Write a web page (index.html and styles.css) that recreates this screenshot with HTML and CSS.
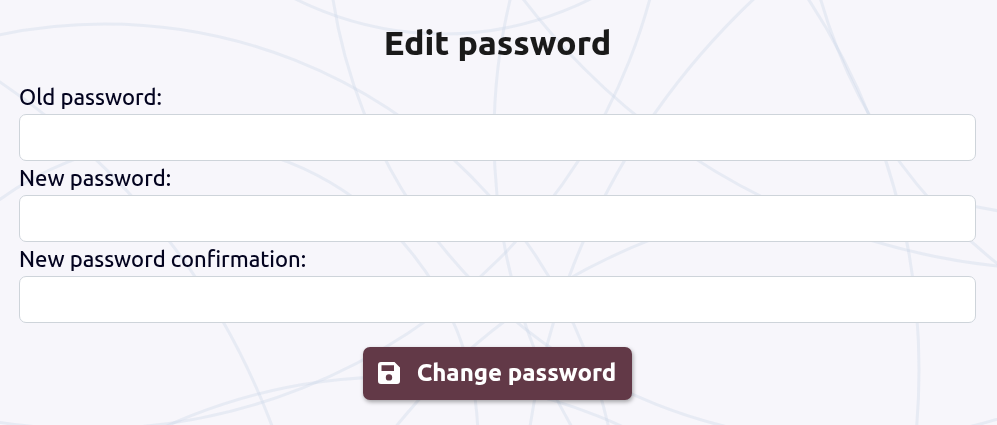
FILE: index.html
```html
<!DOCTYPE html>
<html lang="en">
<head>
<meta charset="utf-8">
<meta name="viewport" content="width=device-width, initial-scale=1">
<title>Edit password</title>
<link rel="stylesheet" href="styles.css">
</head>
<body>
<svg class="backdrop" viewBox="0 0 997 425" preserveAspectRatio="xMidYMin slice" aria-hidden="true">
  <circle cx="105" cy="540" r="516"/>
  <circle cx="848" cy="-80" r="521"/>
  <circle cx="-401" cy="679" r="719"/>
  <circle cx="178" cy="441" r="300"/>
  <circle cx="88" cy="-153" r="582"/>
  <circle cx="394" cy="928" r="551"/>
  <circle cx="443" cy="-294" r="328"/>
  <circle cx="1076" cy="136" r="582"/>
  <circle cx="1071" cy="-419" r="689"/>
  <circle cx="1260" cy="536" r="738"/>
  <circle cx="243" cy="370" r="676"/>
  <circle cx="1318" cy="-142" r="517"/>
  <circle cx="873" cy="810" r="612"/>
</svg>
<main class="page">
  <h1 class="title">Edit password</h1>
  <form class="form">
    <div class="field">
      <label class="label" for="old">Old password:</label>
      <input class="input" id="old" type="password">
    </div>
    <div class="field">
      <label class="label" for="new">New password:</label>
      <input class="input" id="new" type="password">
    </div>
    <div class="field">
      <label class="label" for="confirm">New password confirmation:</label>
      <input class="input" id="confirm" type="password">
    </div>
    <button class="submit" type="submit">
      <svg class="icon" viewBox="0 0 22 22" aria-hidden="true">
        <path fill-rule="evenodd" d="M3 0H16.500L22 5.500V19a3 3 0 0 1-3 3H3a3 3 0 0 1-3-3V3a3 3 0 0 1 3-3ZM3.500 3.200V9H16V3.200ZM11 12.200a3.200 3.200 0 1 0 0 6.400a3.200 3.200 0 0 0 0-6.400Z"/>
      </svg>
      <span>Change password</span>
    </button>
  </form>
</main>
</body>
</html>
```

FILE: styles.css
```css
* {
  box-sizing: border-box;
}

body {
  margin: 0;
  background: #f7f6fb;
  color: #03031f;
  font-family: Ubuntu, "Noto Sans", sans-serif;
  font-size: 22px;
  font-weight: 500;
  line-height: 34px;
}

.backdrop {
  position: fixed;
  inset: 0;
  z-index: -1;
  width: 100%;
  height: 100%;
  fill: none;
  stroke: #c8d3e7;
  stroke-opacity: 0.32;
  stroke-width: 3;
}

.page {
  padding: 20px 21px 24px 19px;
}

.title {
  margin: 0 0 16px;
  color: #1a1a1a;
  font-size: 34px;
  font-weight: 800;
  line-height: 44px;
  text-align: center;
}

.form {
  display: flex;
  flex-direction: column;
}

.field {
  display: flex;
  flex-direction: column;
}

.input {
  width: 100%;
  height: 47px;
  padding: 8px 12px;
  border: 1px solid #ced4da;
  border-radius: 7px;
  background: #fff;
  color: inherit;
  font: inherit;
}

.submit {
  display: flex;
  align-items: center;
  align-self: center;
  gap: 17px;
  margin-top: 24px;
  padding: 9px 16px 10px 15px;
  border: 0;
  border-radius: 7px;
  background: #623947;
  box-shadow: 1px 2px 4px rgba(0, 0, 0, 0.35);
  color: #fff;
  font: inherit;
  font-size: 24px;
  font-weight: 800;
  cursor: pointer;
}

.icon {
  width: 22px;
  height: 22px;
  fill: currentColor;
}
```
